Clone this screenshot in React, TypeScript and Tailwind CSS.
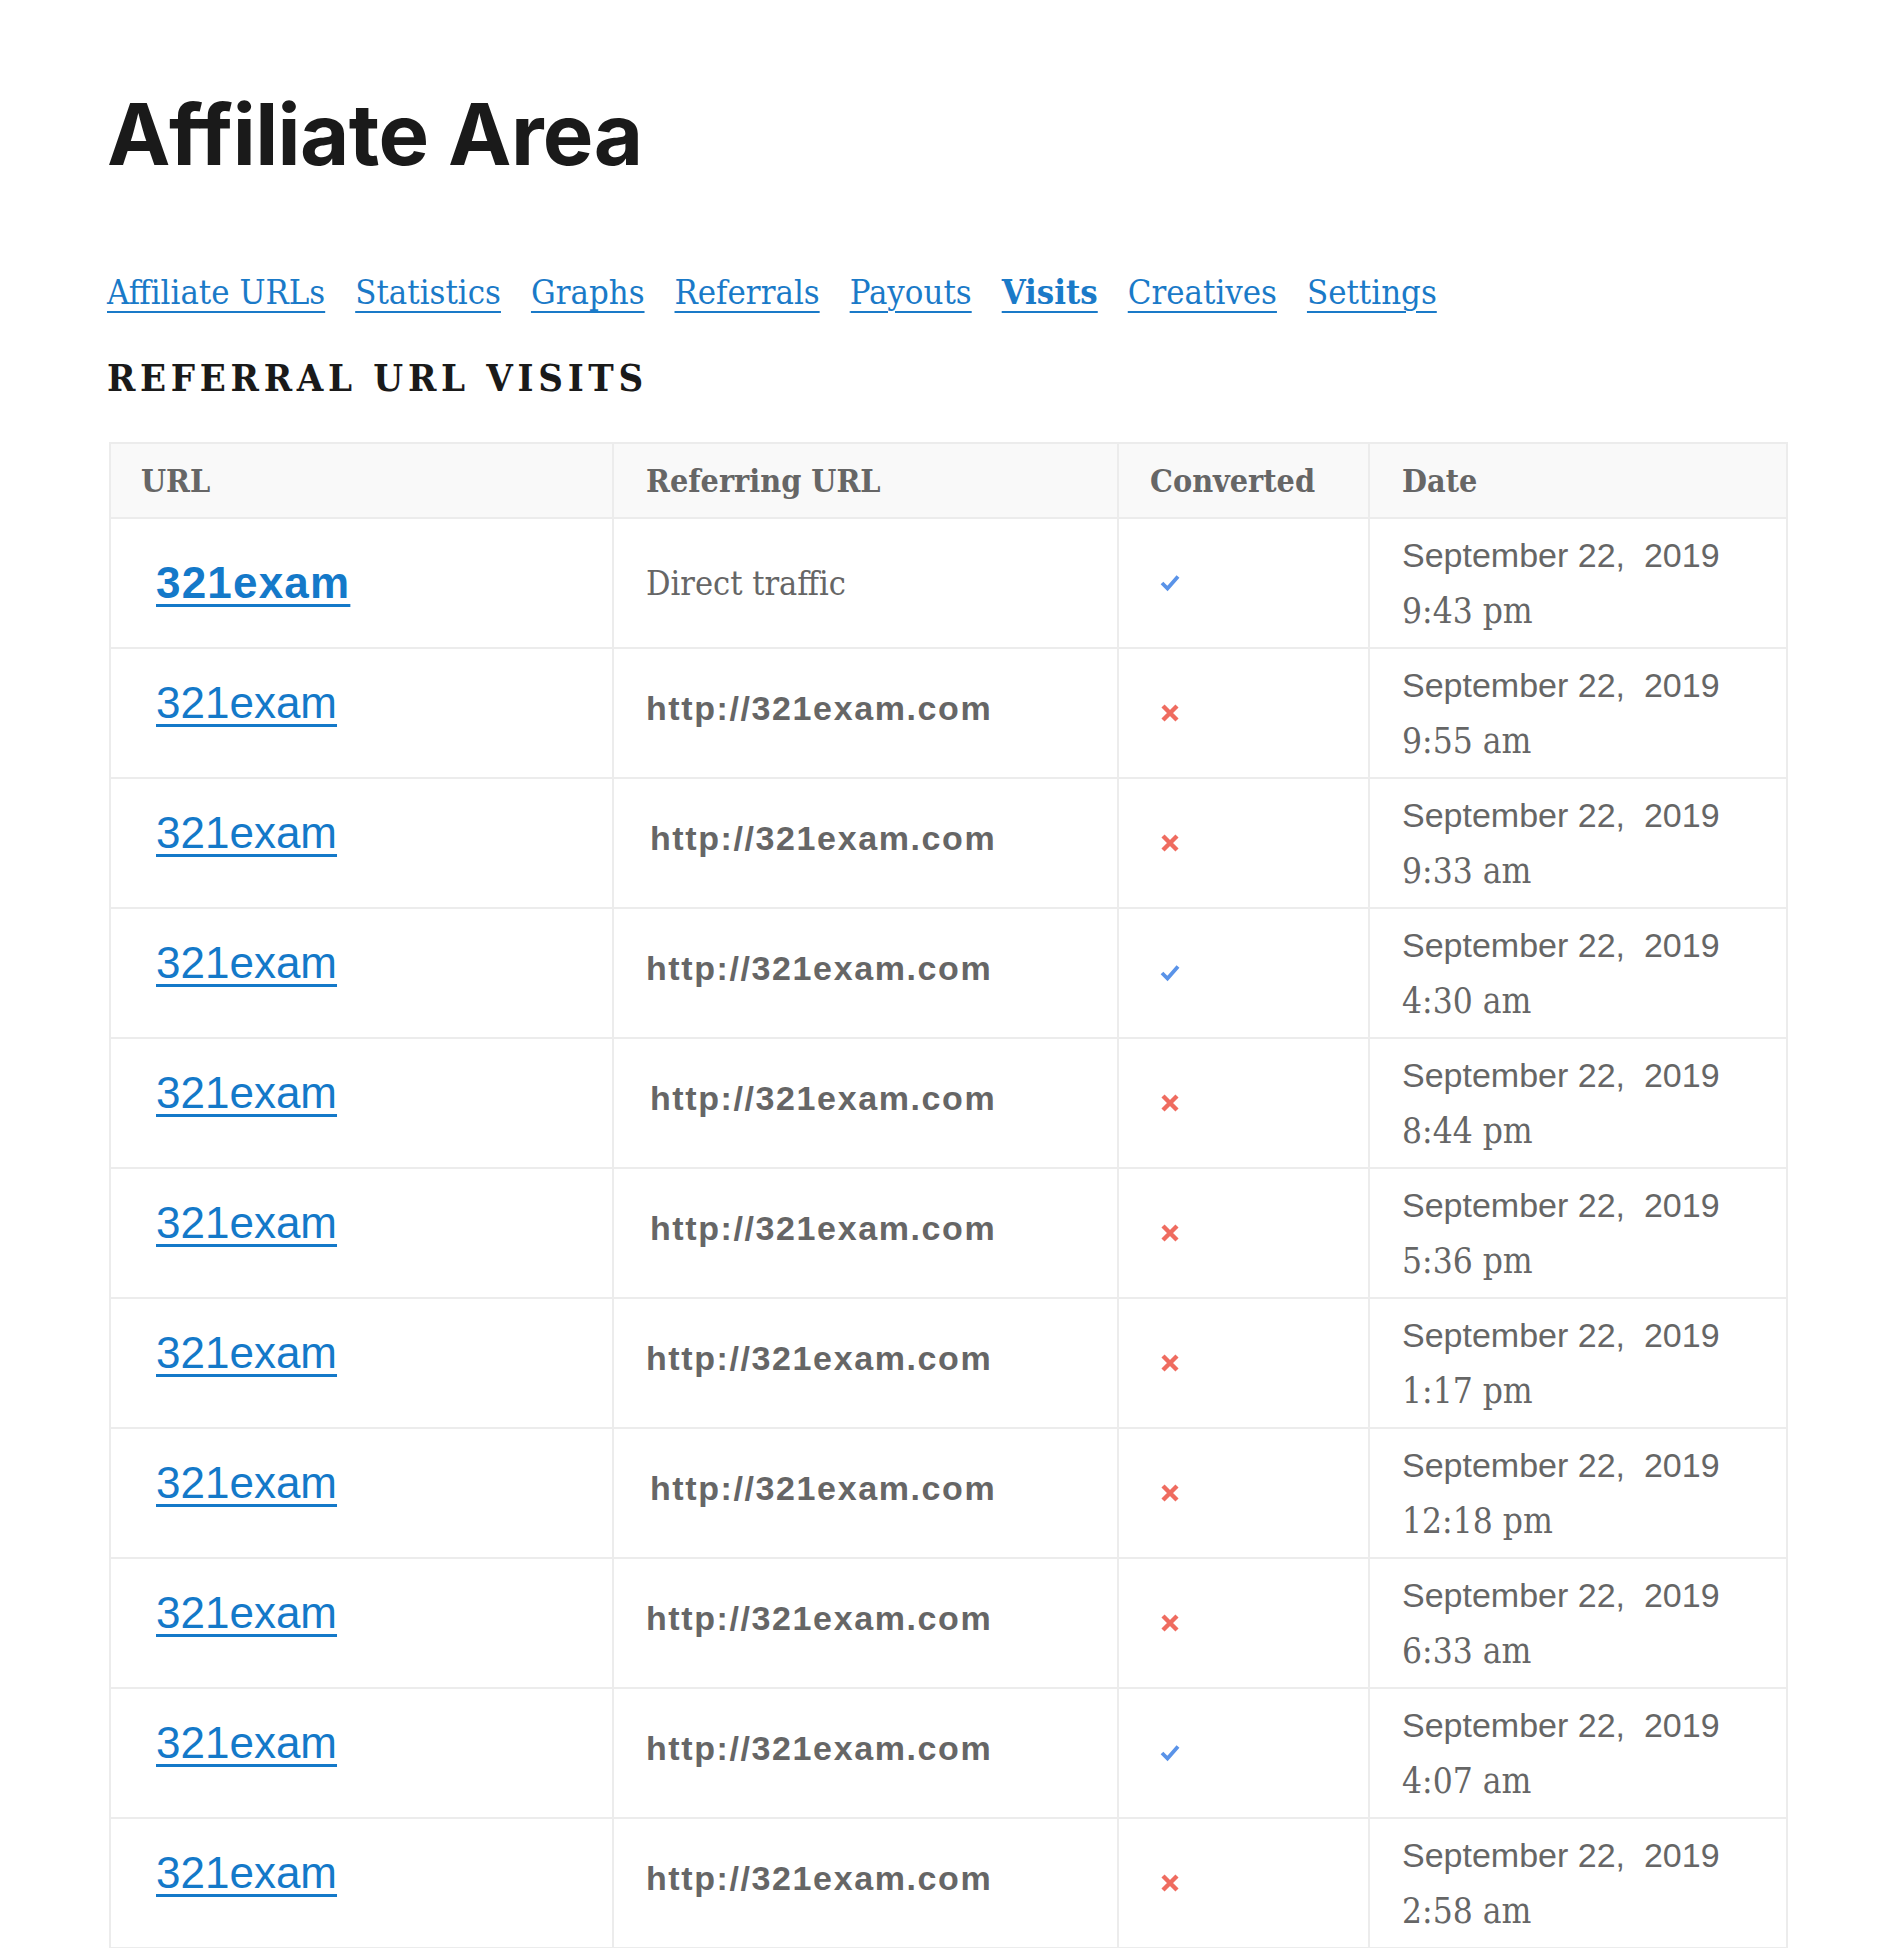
import React from "react";

const serif = "font-['DejaVu_Serif_Condensed','DejaVu_Serif',serif] [font-stretch:condensed]";
const sans = "font-['Liberation_Sans',Arial,sans-serif]";

type Row = { ref: string; conv: boolean; time: string; shift: boolean };

const rows: Row[] = [
  { ref: "Direct traffic", conv: true, time: "9:43 pm", shift: false },
  { ref: "http://321exam.com", conv: false, time: "9:55 am", shift: false },
  { ref: "http://321exam.com", conv: false, time: "9:33 am", shift: true },
  { ref: "http://321exam.com", conv: true, time: "4:30 am", shift: false },
  { ref: "http://321exam.com", conv: false, time: "8:44 pm", shift: true },
  { ref: "http://321exam.com", conv: false, time: "5:36 pm", shift: true },
  { ref: "http://321exam.com", conv: false, time: "1:17 pm", shift: false },
  { ref: "http://321exam.com", conv: false, time: "12:18 pm", shift: true },
  { ref: "http://321exam.com", conv: false, time: "6:33 am", shift: false },
  { ref: "http://321exam.com", conv: true, time: "4:07 am", shift: false },
  { ref: "http://321exam.com", conv: false, time: "2:58 am", shift: false },
];

function Check() {
  return (
    <svg width="22" height="22" viewBox="0 0 22 22" aria-hidden>
      <path d="M3 11 L8.5 16.5 L19 4.5" fill="none" stroke="#5a93e8" strokeWidth="3.8" strokeLinecap="butt" strokeLinejoin="miter" />
    </svg>
  );
}

function Cross() {
  return (
    <svg width="22" height="22" viewBox="0 0 22 22" aria-hidden>
      <path d="M4 4 L18 18 M18 4 L4 18" fill="none" stroke="#ef6c60" strokeWidth="4.4" />
    </svg>
  );
}

const navItems = ["Affiliate URLs", "Statistics", "Graphs", "Referrals", "Payouts", "Visits", "Creatives", "Settings"];

export default function App() {
  return (
    <div className="min-h-[1948px] bg-white pl-[107px] pt-[92px]">
      <h1 className="font-['Inter',sans-serif] text-[85px] leading-none font-bold tracking-[-0.6px] text-[#1a1a1a]">
        Affiliate Area
      </h1>

      <nav className={`mt-[98px] flex gap-[30px] text-[34.4px] leading-none text-[#1a7ac8] ${serif}`}>
        {navItems.map((n) => (
          <a
            key={n}
            href="#"
            className={`underline decoration-2 underline-offset-[7px] ${n === "Visits" ? "font-bold" : ""}`}
          >
            {n}
          </a>
        ))}
      </nav>

      <h2 className={`mt-[50px] text-[38px] leading-none font-bold uppercase tracking-[4.7px] text-[#1a1a1a] ${serif}`}>
        Referral URL Visits
      </h2>

      <table className="mt-[45px] ml-[2px] border-collapse border-2 border-[#ececec] table-fixed w-[1677px]">
        <colgroup>
          <col className="w-[503px]" />
          <col className="w-[505px]" />
          <col className="w-[251px]" />
          <col className="w-[418px]" />
        </colgroup>
        <thead>
          <tr className={`h-[75px] bg-[#f9f9f9] text-left text-[32px] font-bold text-[#666] ${serif}`}>
            <th className="border-2 border-[#ececec] pl-[30px] font-bold">URL</th>
            <th className="border-2 border-[#ececec] pl-[32px] font-bold">Referring URL</th>
            <th className="border-2 border-[#ececec] pl-[31px] font-bold">Converted</th>
            <th className="border-2 border-[#ececec] pl-[32px] font-bold">Date</th>
          </tr>
        </thead>
        <tbody>
          {rows.map((r, i) => (
            <tr key={i} className="h-[130px]">
              <td className={`border-2 border-[#ececec] pl-[45px] align-middle ${i === 0 ? "" : "pb-[20px]"}`}>
                <a
                  href="#"
                  className={`${sans} text-[44px] leading-none text-[#1479c9] underline decoration-[3px] underline-offset-[6px] ${i === 0 ? "font-bold tracking-[1.2px]" : ""}`}
                >
                  321exam
                </a>
              </td>
              <td className={`border-2 border-[#ececec] align-middle ${r.shift ? "pl-[36px]" : "pl-[32px]"} ${i === 0 ? "" : "pb-[9px]"}`}>
                {r.ref === "Direct traffic" ? (
                  <span className={`${serif} text-[34px] text-[#666]`}>{r.ref}</span>
                ) : (
                  <span className={`${sans} text-[34px] font-bold tracking-[1.6px] text-[#666]`}>{r.ref}</span>
                )}
              </td>
              <td className="border-2 border-[#ececec] pl-[40px] align-middle">
                <div className="flex h-[22px] w-[22px] items-center justify-center">{r.conv ? <Check /> : <Cross />}</div>
              </td>
              <td className="border-2 border-[#ececec] pl-[32px] align-middle text-[#666]">
                <div className={`${sans} text-[34px] leading-[56px]`}>September 22,&nbsp; 2019</div>
                <div className={`${serif} text-[35px] leading-[56px]`}>{r.time}</div>
              </td>
            </tr>
          ))}
        </tbody>
      </table>
    </div>
  );
}
